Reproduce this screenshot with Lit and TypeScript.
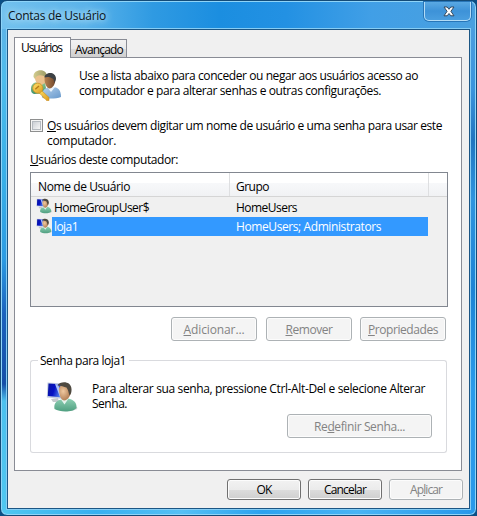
import { LitElement, html, css } from "lit";
import { customElement, property } from "lit/decorators.js";

/** One line of text, tracked so that it fills `w` pixels. */
@customElement("fit-text")
class FitText extends LitElement {
  @property({ type: Number }) w = 0;
  static styles = css`
    :host { display: block; flex: none; white-space: nowrap; line-height: 15px; height: 15px; }
    span { display: inline-block; white-space: pre; }
  `;
  render() {
    return html`<span><slot></slot></span>`;
  }
  firstUpdated() {
    const s = this.renderRoot.querySelector("span") as HTMLElement;
    const n = (this.textContent || "").trim().length;
    const natural = s.getBoundingClientRect().width;
    if (this.w && n) s.style.letterSpacing = (this.w - natural) / n + "px";
  }
}

const userIcon = (size: number) => html`<svg width=${size} height=${size} viewBox="0 0 32 32">
  <defs>
    <linearGradient id="scr" x1="0" y1="0" x2="1" y2="0.3"><stop offset="0" stop-color="#0a14a0" /><stop offset=".5" stop-color="#0612c4" /><stop offset="1" stop-color="#5b8df0" /></linearGradient>
    <linearGradient id="grn" x1="0" y1="0" x2="0" y2="1"><stop offset="0" stop-color="#8fd0b4" /><stop offset="1" stop-color="#4f9f80" /></linearGradient>
    <radialGradient id="skn" cx=".35" cy=".4" r=".7"><stop offset="0" stop-color="#f0c9a0" /><stop offset="1" stop-color="#a9744a" /></radialGradient>
  </defs>
  <ellipse cx="22" cy="27" rx="9.5" ry="3" fill="#b8bcbc" opacity=".6" />
  <path d="M5 18l7-1 1 4-6 0z" fill="#c6cacd" />
  <path d="M1.500 1.500L18 2.500V18L.800 16.500z" fill="#c4cee2" />
  <path d="M2.500 2.500L17 3.500V16.500L1.800 15z" fill="url(#scr)" />
  <path d="M9 3L12 3.200L16.500 16.400L14 16z" fill="#c4dafb" opacity=".85" />
  <path d="M8.500 28C7.500 22 11 19 16 18.500L22 17.500C28 18.500 31 22 30.500 27C27 31.500 14 31.500 8.500 28z" fill="url(#grn)" />
  <path d="M15 18.500l3.500 5 4-6z" fill="#e6f3ed" />
  <path d="M13 8C13 3 24.500 2 25 9.500C25 14 22 19.500 18 19.500C14.500 19 13 13 13 8z" fill="url(#skn)" />
  <path d="M11.500 4.500C14 0 25 -.5 25.500 8C25.700 11 25 13 23.500 14.500C22.500 12 22.500 9 20.500 6.500C18 6 15 4.500 11.500 4.500z" fill="#4e4940" />
</svg>`;

const usersIcon = html`<svg width="32" height="32" viewBox="0 0 32 32">
  <defs>
    <linearGradient id="blu" x1="0" y1="0" x2="1" y2="1"><stop offset="0" stop-color="#b6d2ee" /><stop offset="1" stop-color="#6798cb" /></linearGradient>
    <linearGradient id="gr2" x1="0" y1="0" x2="0" y2="1"><stop offset="0" stop-color="#94c992" /><stop offset="1" stop-color="#3f936b" /></linearGradient>
    <linearGradient id="brn" x1="0" y1="0" x2="1" y2="0"><stop offset="0" stop-color="#b98350" /><stop offset="1" stop-color="#70472c" /></linearGradient>
    <linearGradient id="bln" x1="0" y1="0" x2="1" y2="0"><stop offset="0" stop-color="#d3cd8f" /><stop offset="1" stop-color="#9a9863" /></linearGradient>
    <linearGradient id="key" x1="0" y1="0" x2="1" y2="1"><stop offset="0" stop-color="#ffe46c" /><stop offset="1" stop-color="#dc9a1c" /></linearGradient>
  </defs>
  <path d="M1 20C1 15 4 13.500 8 13L15 14L17 24L4 25C1.500 24 1 23 1 20z" fill="url(#gr2)" />
  <path d="M4.500 7C4 1 15 0 16 6L15 14L10 17C7 16 5 12 4.500 7z" fill="#ebc18c" />
  <path d="M3.500 8C3 -0.500 16 -1 17 6.500L16 10L14 7C10 5.500 6 6 5 10z" fill="url(#bln)" />
  <path d="M12 28.500C11 22 15 18.500 20 18L26 18.500C30 20 31 24 31 28C26 30 17 30 12 28.500z" fill="url(#blu)" />
  <path d="M17 18l4 5 4-5z" fill="#eaf3fb" />
  <path d="M14.500 10C14.500 3 25.500 3 25.500 10C25.500 15 22.500 19.500 19.500 19.500C16.500 19 14.500 15 14.500 10z" fill="url(#brn)" />
  <path d="M14.500 8.500C15 2.500 26 2 26 10L24.500 14L23.500 10C20 7.500 17 7.500 14.500 8.500z" fill="#3d4145" />
  <path d="M10.500 20.500L19 28.500V31.500H16.500L15 29.500L13.500 29L12.500 27L8 23z" fill="url(#key)" stroke="#c98f1e" stroke-width=".6" />
  <circle cx="7.800" cy="19.200" r="5" fill="url(#key)" stroke="#cf9626" stroke-width=".8" />
  <path d="M5.300 20.300L9 17" stroke="#b67b17" stroke-width="1.400" />
</svg>`;

@customElement("app-root")
class AppRoot extends LitElement {
  static styles = css`
    * { box-sizing: border-box; }
    :host {
      display: block; width: 477px; height: 516px; overflow: hidden; background: #0a4f86;
      font: 12px "Open Sans", "Noto Sans", sans-serif; color: #000; cursor: default;
    }
    .window {
      display: flex; flex-direction: column; width: 477px; height: 516px; margin: 0; padding: 0 6px 6px;
      border: 1px solid #134b78; border-radius: 7px;
      box-shadow: inset 0 0 0 1px #8ed4f8;
      background:
        linear-gradient(180deg, #5cb4e8 0, #4ebcec 50px, #39afe7 150px, #2c9be3 230px, #1b62bd 285px, #164fa8 355px, #4cc0ee 372px, #51c9f1 100%) left 0 top 28px / 8px 100% no-repeat,
        linear-gradient(180deg, #4b9ddf 0, #3a94dc 60px, #1f75bf 110px, #2f94de 170px, #1d83d4 260px, #2a9bea 360px, #2898e9 100%) right 0 top 28px / 8px 100% no-repeat,
        linear-gradient(90deg, #4fc7f0, #37b0f0 20%, #55c0f4 38%, #2ba2ef 55%, #48b4f4 75%, #2797ea) left 0 bottom 0 / 100% 8px no-repeat,
        linear-gradient(90deg, #72c1ee 0, #5ab3ea 18%, #2f9ae2 32%, #1b8ee0 46%, #2391e3 60%, #419fe6 78%, #4aa0df 100%);
    }
    .titlebar { display: flex; height: 28px; flex: none; justify-content: space-between; padding-top: 1px; }
    .title { margin: 6px 0 0 1px; text-shadow: 0 0 6px #d5efff, 0 0 10px #c2e6ff; color: #0a1420; }
    .close {
      width: 47px; height: 19px; margin-right: -1px; border: 1px solid #b3dcf6; border-top: 0; border-radius: 0 0 5px 5px;
      display: flex; align-items: center; justify-content: center;
      background: linear-gradient(#5aa9e3, #3d92d8 50%, #4a9edf); box-shadow: 0 0 0 1px #2876b8;
    }
    .close svg { margin-left: 2px; }
    .client {
      flex: 1; border: 1px solid #1c5684; background: #f0f0f0; box-shadow: 0 0 0 1px #86cdf4;
      display: flex; flex-direction: column; padding: 6px 6px 0;
    }
    .tabs { display: flex; align-items: flex-end; height: 21px; flex: none; }
    .tab { border: 1px solid #898c95; border-bottom: 0; }
    .tab.on { width: 57px; height: 21px; background: #fff; padding: 2px 0 0 6px; margin-bottom: -1px; position: relative; }
    .tab.off {
      width: 56px; height: 18px; border-left: 0; padding: 2px 0 0 4px;
      background: linear-gradient(#f2f2f2, #ebebeb 50%, #dddddd 50%, #cfcfcf);
    }
    .panel {
      width: 448px; height: 414px; flex: none; background: #fff; border: 1px solid #898c95;
      padding: 10px 14px 0 15px; display: flex; flex-direction: column;
    }
    .intro { display: flex; height: 50px; flex: none; }
    .intro svg { margin: 1px 17px 0 0; }
    .lines { display: flex; flex-direction: column; }
    svg { flex: none; display: block; }
    .check { display: flex; gap: 4px; height: 34px; flex: none; }
    .box {
      width: 13px; height: 13px; margin-top: 1px; border: 1px solid #8e8f8f; background: #f4f4f4; padding: 1px; flex: none;
    }
    .box i { display: block; width: 9px; height: 9px; border: 1px solid #b5bac0; background: linear-gradient(135deg, #cbcfd5, #f6f6f6); }
    .list { width: 418px; height: 135px; flex: none; margin-top: 5px; border: 1px solid #828790; background: #f0f0f0; }
    .head { display: flex; height: 24px; border-bottom: 1px solid #d5d5d5; background: linear-gradient(#fff 0, #fff 42%, #f7f8fa 42%, #f1f2f4 100%); }
    .cell { border-right: 1px solid #dedfe1; padding: 6px 0 0 7px; height: 23px; }
    .c1 { width: 199px; }
    .c2 { width: 199px; padding-left: 6px; }
    .row { display: flex; height: 19px; width: 397px; }
    .row:nth-child(2) { height: 20px; }
    .row svg { margin: 1px 0 0 5px; }
    .name, .group { height: 19px; padding-top: 3px; }
    .sel .name, .sel .group { padding-top: 2px; }
    .name { width: 178px; padding-left: 2px; }
    .group { flex: 1; padding-left: 6px; }
    .sel .name, .sel .group { background: #3399ff; color: #fff; }
    .actions { display: flex; justify-content: flex-end; gap: 8px; margin: 10px 1px 0 0; flex: none; }
    .actions .btn:first-child { margin-right: 1px; }
    .btn {
      display: flex; align-items: center; justify-content: center; border: 1px solid #707070; border-radius: 3px;
      background: linear-gradient(#f2f2f2, #ebebeb 50%, #dddddd 50%, #cfcfcf); box-shadow: inset 0 0 0 1px #fcfcfc; flex: none;
    }
    .btn.dis { border-color: #adb2b5; background: #f4f4f4; color: #838383; }
    .b86 { width: 86px; height: 24px; }
    .b145 { width: 145px; height: 24px; }
    .b74 { width: 74px; height: 21px; }
    .groupbox {
      margin: 11px 0 0; padding: 0; border: 0; width: 417px; height: 101px; flex: none; display: flex; flex-direction: column;
    }
    .legend { display: flex; height: 16px; align-items: flex-start; }
    .legend::before, .legend::after { content: ""; border-top: 1px solid #d9dade; height: 8px; margin-top: 8px; }
    .legend::before { width: 7px; border-left: 1px solid #d9dade; border-top-left-radius: 3px; }
    .legend::after { flex: 1; border-right: 1px solid #d9dade; border-top-right-radius: 3px; }
    .legend fit-text { margin: 1px 3px 0 2px; }
    .gbody { flex: 1; border: 1px solid #d9dade; border-top: 0; border-radius: 0 0 3px 3px; display: flex; flex-direction: column; padding: 13px 14px 0 16px; }
    .gtop { display: flex; height: 33px; gap: 13px; flex: none; }
    .gtop svg { margin: 0 1px 0 -1px; }
    .gbody .btn { align-self: flex-end; }
    .footer { display: flex; gap: 7px; justify-content: flex-end; margin-top: 8px; padding-right: 0; }
    u { text-decoration: underline; text-underline-offset: 1px; text-decoration-thickness: 1px; }
  `;
  render() {
    return html`<div class="window">
      <div class="titlebar">
        <fit-text class="title" w="98">Contas de Usuário</fit-text>
        <div class="close"><svg width="12" height="11" viewBox="0 0 12 11"><path d="M1 1h3.200L6 3.300 7.800 1H11L7.900 5.300 11 9.800H7.800L6 7.500 4.200 9.800H1L4.100 5.300z" fill="#fff" stroke="#34495e" stroke-width="1" /></svg></div>
      </div>
      <div class="client">
        <div class="tabs">
          <div class="tab on"><fit-text w="41">Usuários</fit-text></div>
          <div class="tab off"><fit-text w="48">Avançado</fit-text></div>
        </div>
        <div class="panel">
          <div class="intro">${usersIcon}
            <div class="lines">
              <fit-text w="339">Use a lista abaixo para conceder ou negar aos usuários acesso ao</fit-text>
              <fit-text w="302">computador e para alterar senhas e outras configurações.</fit-text>
            </div>
          </div>
          <div class="check"><span class="box"><i></i></span>
            <div class="lines">
              <fit-text w="395"><u>O</u>s usuários devem digitar um nome de usuário e uma senha para usar este</fit-text>
              <fit-text w="69">computador.</fit-text>
            </div>
          </div>
          <fit-text w="148"><u>U</u>suários deste computador:</fit-text>
          <div class="list">
            <div class="head">
              <div class="cell c1"><fit-text w="92">Nome de Usuário</fit-text></div>
              <div class="cell c2"><fit-text w="33">Grupo</fit-text></div>
            </div>
            <div class="row">${userIcon(16)}
              <div class="name"><fit-text w="95">HomeGroupUser$</fit-text></div>
              <div class="group"><fit-text w="61">HomeUsers</fit-text></div>
            </div>
            <div class="row sel">${userIcon(16)}
              <div class="name"><fit-text w="24">loja1</fit-text></div>
              <div class="group"><fit-text w="145">HomeUsers; Administrators</fit-text></div>
            </div>
          </div>
          <div class="actions">
            <div class="btn dis b86"><fit-text w="61"><u>A</u>dicionar...</fit-text></div>
            <div class="btn dis b86"><fit-text w="47"><u>R</u>emover</fit-text></div>
            <div class="btn dis b86"><fit-text w="70"><u>P</u>ropriedades</fit-text></div>
          </div>
          <div class="groupbox">
            <div class="legend"><fit-text w="86">Senha para loja1</fit-text></div>
            <div class="gbody">
              <div class="gtop">${userIcon(32)}
                <div class="lines">
                  <fit-text w="333">Para alterar sua senha, pressione Ctrl-Alt-Del e selecione Alterar</fit-text>
                  <fit-text w="35">Senha.</fit-text>
                </div>
              </div>
              <div class="btn dis b145"><fit-text w="91">Re<u>d</u>efinir Senha...</fit-text></div>
            </div>
          </div>
        </div>
        <div class="footer">
          <div class="btn b74"><fit-text w="15">OK</fit-text></div>
          <div class="btn b74"><fit-text w="42">Cancelar</fit-text></div>
          <div class="btn dis b74"><fit-text w="32">Ap<u>l</u>icar</fit-text></div>
        </div>
      </div>
    </div>`;
  }
}
